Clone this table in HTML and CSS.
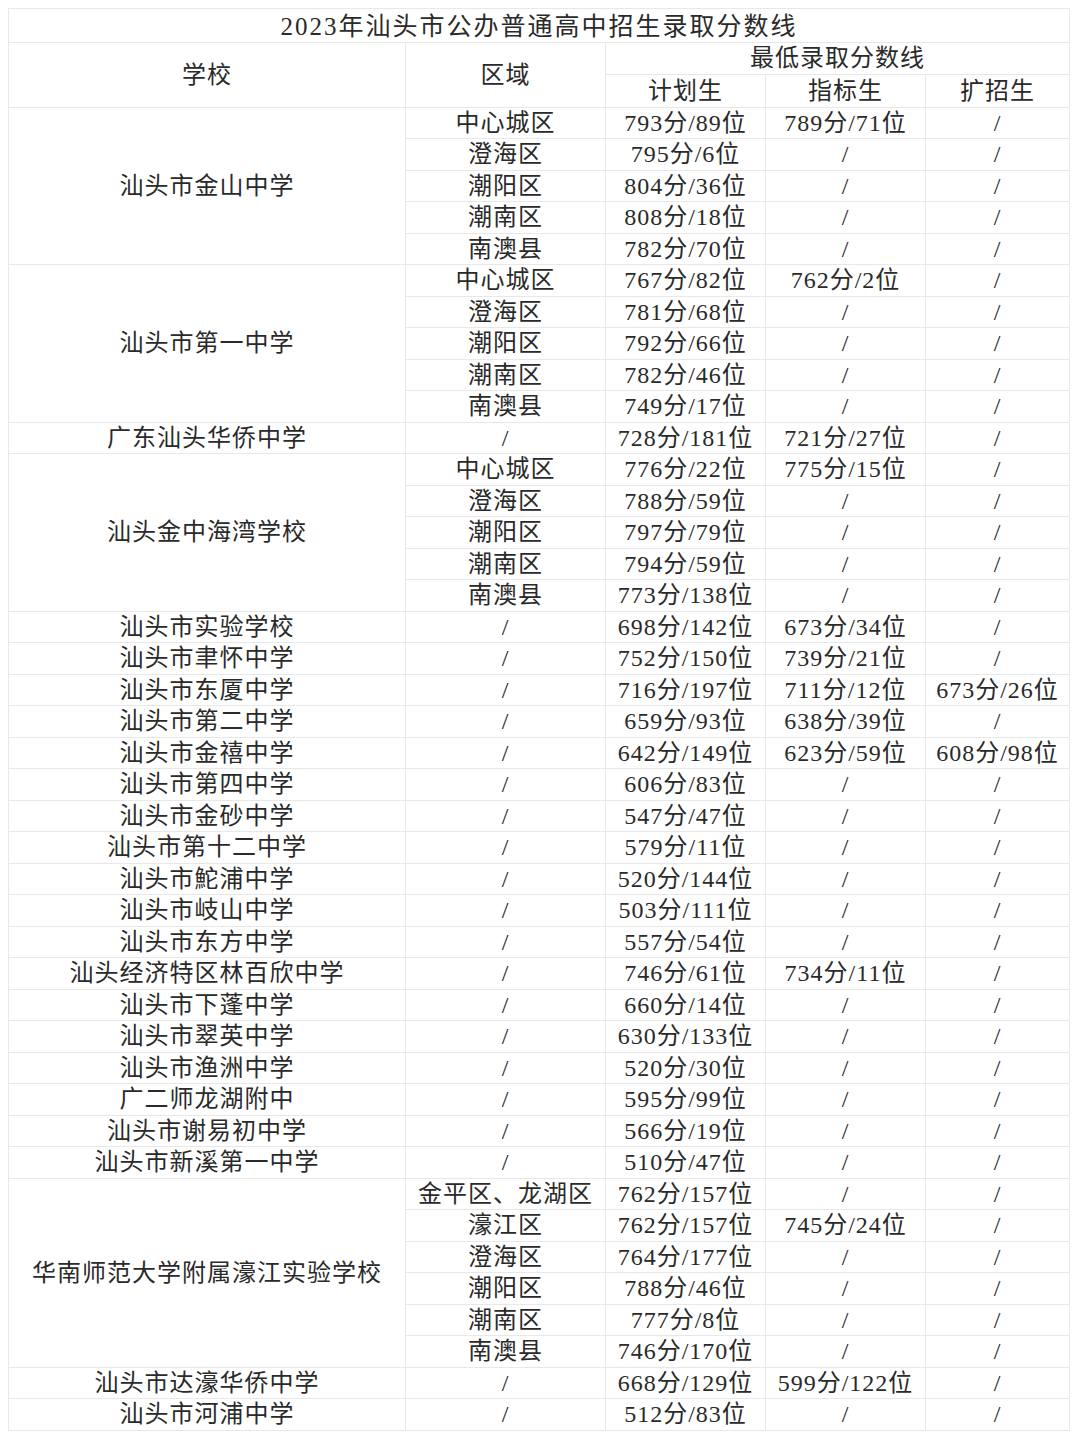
FILE: index.html
```html
<!DOCTYPE html>
<html lang="zh-CN">
<head>
<meta charset="utf-8">
<title>2023年汕头市公办普通高中招生录取分数线</title>
<link rel="stylesheet" href="styles.css">
</head>
<body>
<table class="score-table">
<colgroup>
<col class="c-school"><col class="c-area"><col class="c-num"><col class="c-num"><col class="c-ext">
</colgroup>
<thead>
<tr class="r-title"><th colspan="5" class="title">2023年汕头市公办普通高中招生录取分数线</th></tr>
<tr class="r-head"><th rowspan="2">学校</th><th rowspan="2">区域</th><th colspan="3">最低录取分数线</th></tr>
<tr class="r-head"><th>计划生</th><th>指标生</th><th>扩招生</th></tr>
</thead>
<tbody>
<tr><td rowspan="5">汕头市金山中学</td><td>中心城区</td><td>793分/89位</td><td>789分/71位</td><td>/</td></tr>
<tr><td>澄海区</td><td>795分/6位</td><td>/</td><td>/</td></tr>
<tr><td>潮阳区</td><td>804分/36位</td><td>/</td><td>/</td></tr>
<tr><td>潮南区</td><td>808分/18位</td><td>/</td><td>/</td></tr>
<tr><td>南澳县</td><td>782分/70位</td><td>/</td><td>/</td></tr>
<tr><td rowspan="5">汕头市第一中学</td><td>中心城区</td><td>767分/82位</td><td>762分/2位</td><td>/</td></tr>
<tr><td>澄海区</td><td>781分/68位</td><td>/</td><td>/</td></tr>
<tr><td>潮阳区</td><td>792分/66位</td><td>/</td><td>/</td></tr>
<tr><td>潮南区</td><td>782分/46位</td><td>/</td><td>/</td></tr>
<tr><td>南澳县</td><td>749分/17位</td><td>/</td><td>/</td></tr>
<tr><td>广东汕头华侨中学</td><td>/</td><td>728分/181位</td><td>721分/27位</td><td>/</td></tr>
<tr><td rowspan="5">汕头金中海湾学校</td><td>中心城区</td><td>776分/22位</td><td>775分/15位</td><td>/</td></tr>
<tr><td>澄海区</td><td>788分/59位</td><td>/</td><td>/</td></tr>
<tr><td>潮阳区</td><td>797分/79位</td><td>/</td><td>/</td></tr>
<tr><td>潮南区</td><td>794分/59位</td><td>/</td><td>/</td></tr>
<tr><td>南澳县</td><td>773分/138位</td><td>/</td><td>/</td></tr>
<tr><td>汕头市实验学校</td><td>/</td><td>698分/142位</td><td>673分/34位</td><td>/</td></tr>
<tr><td>汕头市聿怀中学</td><td>/</td><td>752分/150位</td><td>739分/21位</td><td>/</td></tr>
<tr><td>汕头市东厦中学</td><td>/</td><td>716分/197位</td><td>711分/12位</td><td>673分/26位</td></tr>
<tr><td>汕头市第二中学</td><td>/</td><td>659分/93位</td><td>638分/39位</td><td>/</td></tr>
<tr><td>汕头市金禧中学</td><td>/</td><td>642分/149位</td><td>623分/59位</td><td>608分/98位</td></tr>
<tr><td>汕头市第四中学</td><td>/</td><td>606分/83位</td><td>/</td><td>/</td></tr>
<tr><td>汕头市金砂中学</td><td>/</td><td>547分/47位</td><td>/</td><td>/</td></tr>
<tr><td>汕头市第十二中学</td><td>/</td><td>579分/11位</td><td>/</td><td>/</td></tr>
<tr><td>汕头市鮀浦中学</td><td>/</td><td>520分/144位</td><td>/</td><td>/</td></tr>
<tr><td>汕头市岐山中学</td><td>/</td><td>503分/111位</td><td>/</td><td>/</td></tr>
<tr><td>汕头市东方中学</td><td>/</td><td>557分/54位</td><td>/</td><td>/</td></tr>
<tr><td>汕头经济特区林百欣中学</td><td>/</td><td>746分/61位</td><td>734分/11位</td><td>/</td></tr>
<tr><td>汕头市下蓬中学</td><td>/</td><td>660分/14位</td><td>/</td><td>/</td></tr>
<tr><td>汕头市翠英中学</td><td>/</td><td>630分/133位</td><td>/</td><td>/</td></tr>
<tr><td>汕头市渔洲中学</td><td>/</td><td>520分/30位</td><td>/</td><td>/</td></tr>
<tr><td>广二师龙湖附中</td><td>/</td><td>595分/99位</td><td>/</td><td>/</td></tr>
<tr><td>汕头市谢易初中学</td><td>/</td><td>566分/19位</td><td>/</td><td>/</td></tr>
<tr><td>汕头市新溪第一中学</td><td>/</td><td>510分/47位</td><td>/</td><td>/</td></tr>
<tr><td rowspan="6">华南师范大学附属濠江实验学校</td><td>金平区、龙湖区</td><td>762分/157位</td><td>/</td><td>/</td></tr>
<tr><td>濠江区</td><td>762分/157位</td><td>745分/24位</td><td>/</td></tr>
<tr><td>澄海区</td><td>764分/177位</td><td>/</td><td>/</td></tr>
<tr><td>潮阳区</td><td>788分/46位</td><td>/</td><td>/</td></tr>
<tr><td>潮南区</td><td>777分/8位</td><td>/</td><td>/</td></tr>
<tr><td>南澳县</td><td>746分/170位</td><td>/</td><td>/</td></tr>
<tr><td>汕头市达濠华侨中学</td><td>/</td><td>668分/129位</td><td>599分/122位</td><td>/</td></tr>
<tr><td>汕头市河浦中学</td><td>/</td><td>512分/83位</td><td>/</td><td>/</td></tr>
</tbody>
</table>
</body>
</html>
```

FILE: styles.css
```css
html, body {
  background: #ffffff;
}
body {
  margin: 8px;
  font-family: "Liberation Serif", "Noto Sans CJK SC", serif;
  color: #2a2a2a;
}
.score-table {
  width: 1061px;
  table-layout: fixed;
  border-collapse: collapse;
}
.c-school { width: 397px; }
.c-area { width: 200px; }
.c-num { width: 160px; }
.c-ext { width: 144px; }
.score-table th,
.score-table td {
  border: 1px solid #e8e8e8;
  padding: 0;
  text-align: center;
  vertical-align: middle;
  font-weight: 400;
  font-size: 24px;
  letter-spacing: 1px;
  line-height: 28px;
  white-space: nowrap;
  overflow: hidden;
}
.score-table tbody tr {
  height: 31.5px;
}
.r-title {
  height: 33.5px;
}
.r-head {
  height: 32.6px;
}
.score-table th.title {
  font-size: 25px;
  letter-spacing: 2px;
  padding-top: 4px;
}
```
